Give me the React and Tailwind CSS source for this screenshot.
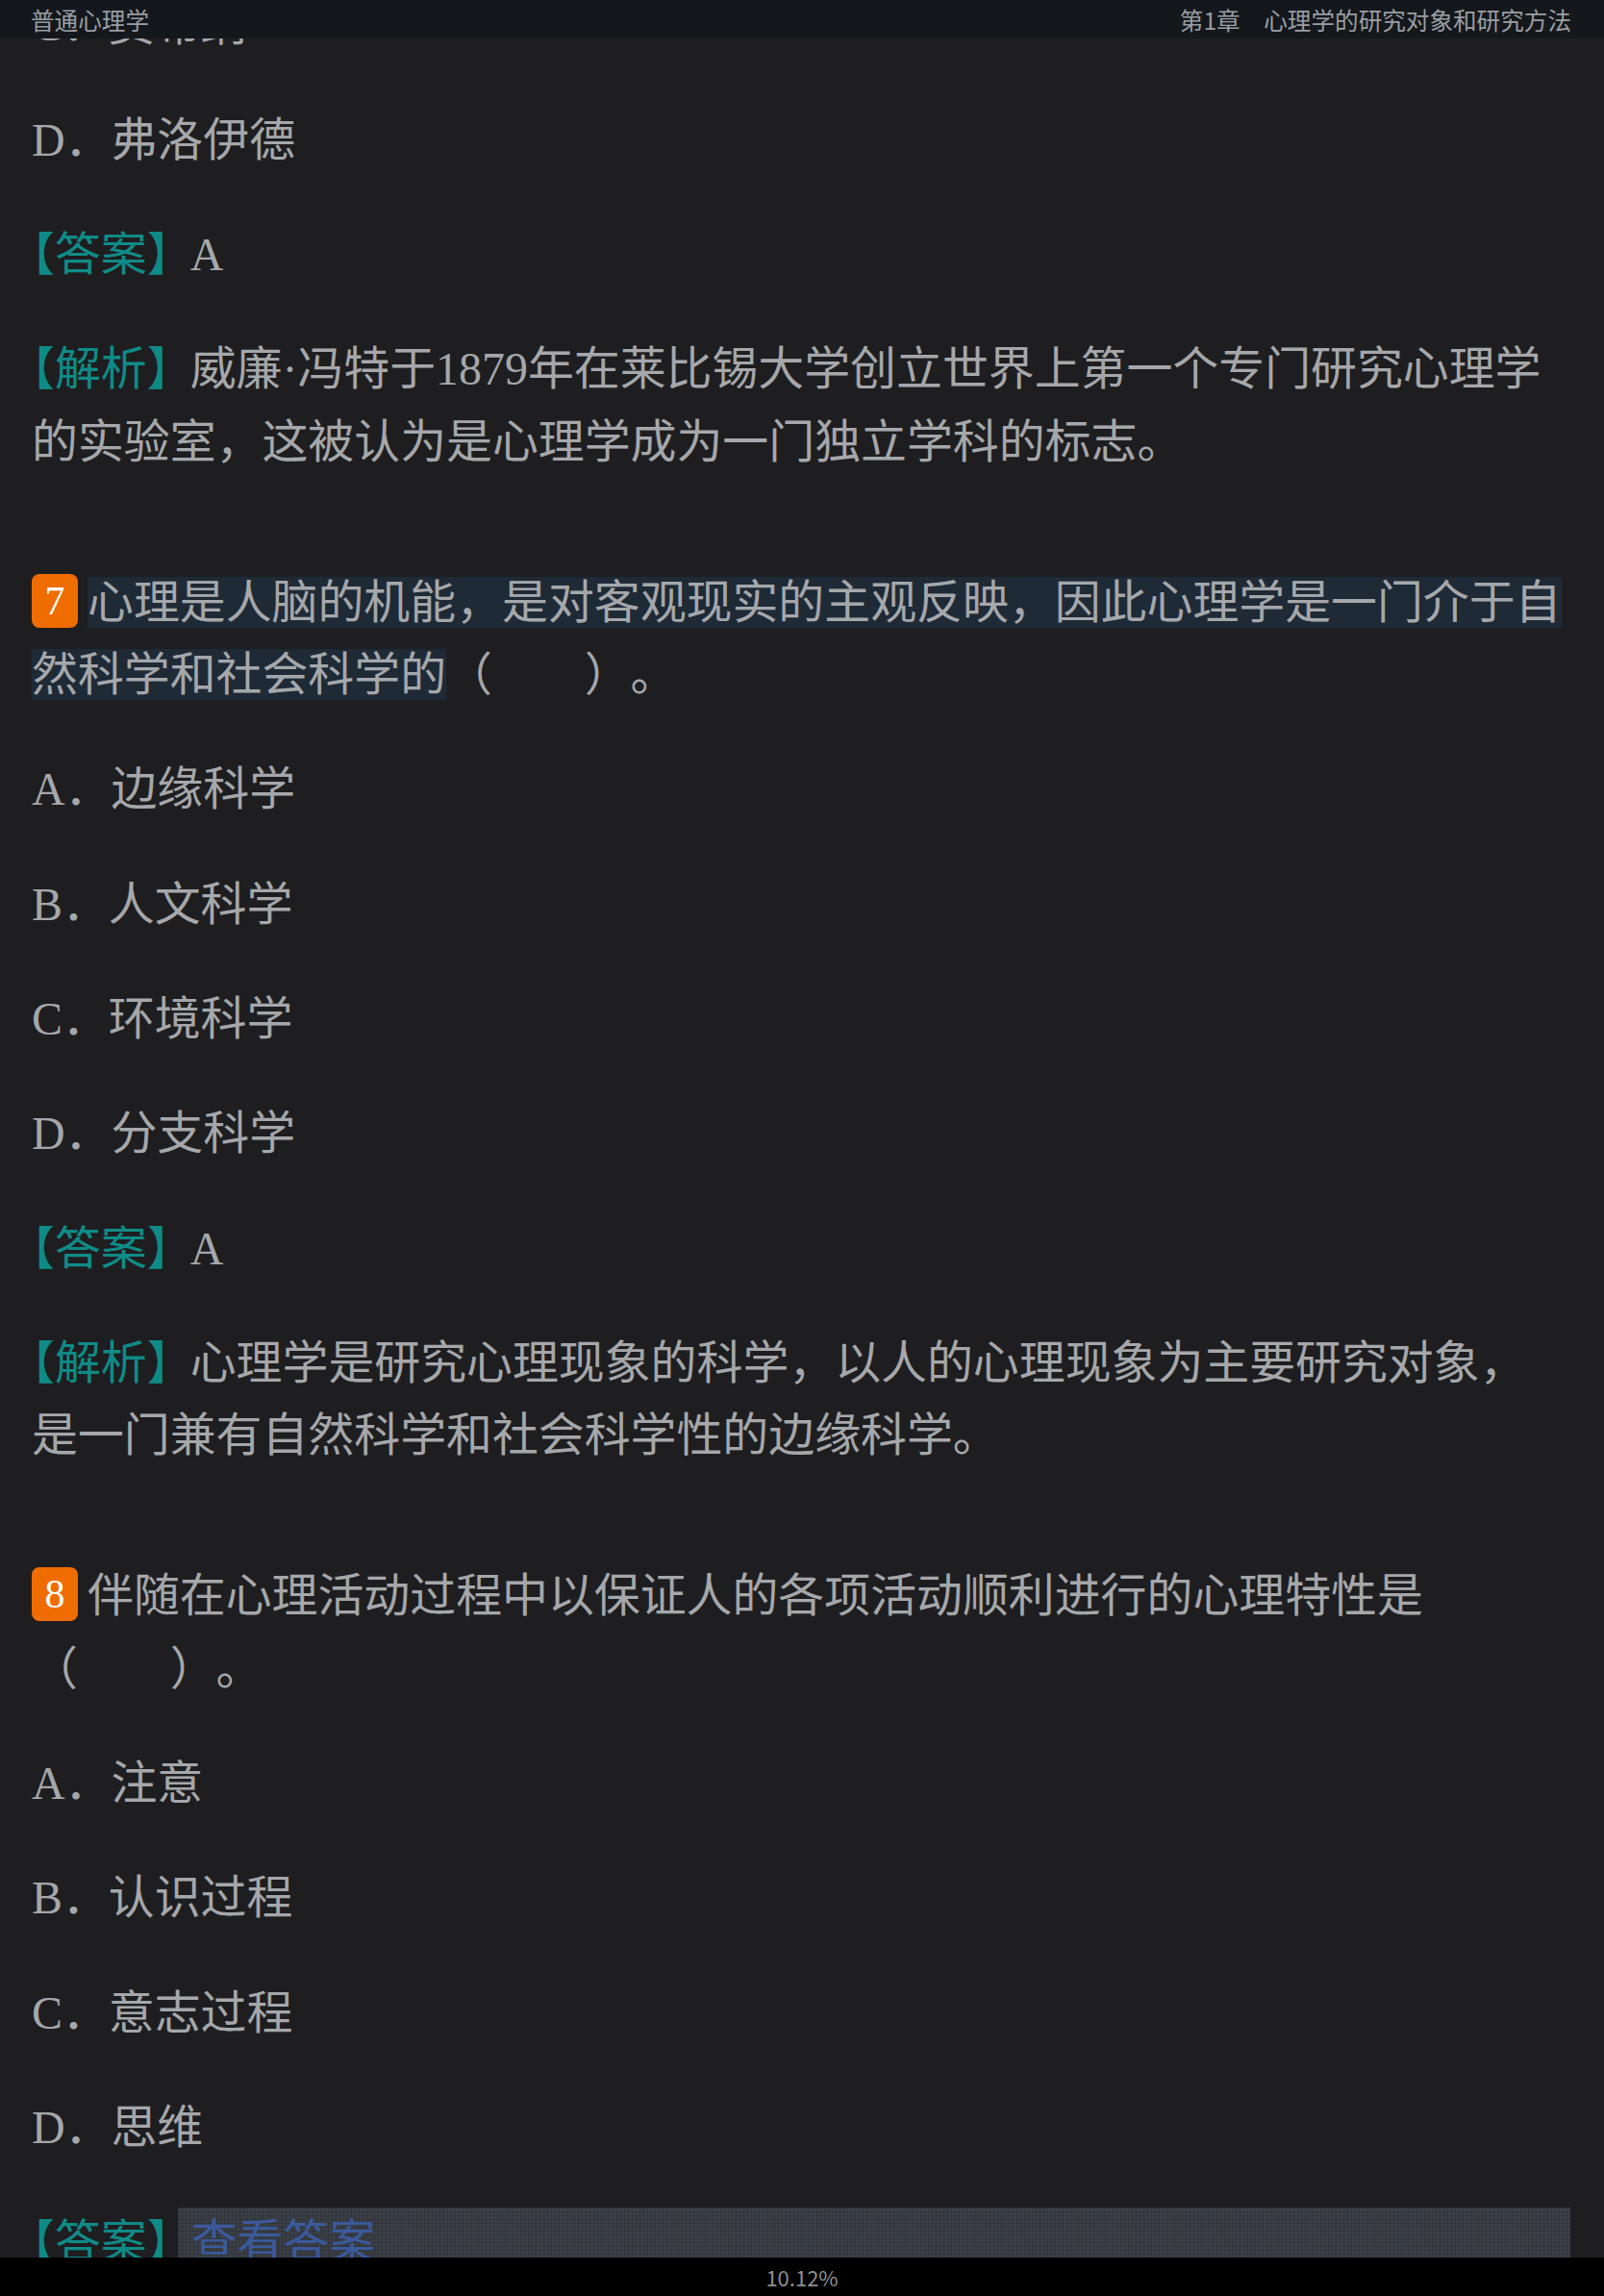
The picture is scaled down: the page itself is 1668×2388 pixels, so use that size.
import React from 'react'

const serif = "font-['Liberation_Serif','Noto_Sans_CJK_SC',serif]"
const sans = "font-['Noto_Sans_CJK_SC','Noto_Sans',sans-serif]"

function Label({ children, className = "mr-[21px]" }) {
  return (
    <span className={`text-[#0f8b87] ${className}`}>
      <span className="[font-feature-settings:'halt']">【</span>
      {children}
      <span className="[font-feature-settings:'halt']">】</span>
    </span>
  )
}

function Line({ children, className = "" }) {
  return <p className={`mb-[43.8px] leading-[75.5px] ${className}`}>{children}</p>
}

function Question({ num, children, tail, highlight }) {
  return (
    <Line className="mt-[47.7px]">
      <span className="mr-[10px] inline-block h-[56px] w-[48px] rounded-[8px] bg-[#ef6c00] text-center align-text-bottom text-[42px] leading-[56px] text-white">
        {num}
      </span>
      <span className={highlight ? "bg-[#1f2a37]" : ""}>{children}</span>
      <span className="whitespace-nowrap">{tail}</span>
    </Line>
  )
}

function Answer() {
  return (
    <Line>
      <Label>答案</Label>A
    </Line>
  )
}

export default function App() {
  return (
    <div className={`relative h-[2388px] overflow-hidden bg-[#1e1e20] ${serif}`}>
      <div className="-mt-[11.75px] flex flex-col pl-[33px] pr-[34px] text-[47.9px] text-[#a5a7aa] [text-spacing-trim:space-all]">
        <Line>C．费希纳</Line>
        <Line>D．弗洛伊德</Line>
        <Answer />
        <Line>
          <Label>解析</Label>威廉·冯特于1879年在莱比锡大学创立世界上第一个专门研究心理学的实验室，这被认为是心理学成为一门独立学科的标志。
        </Line>

        <Question num="7" highlight tail="（　　）。">
          心理是人脑的机能，是对客观现实的主观反映，因此心理学是一门介于自然科学和社会科学的
        </Question>
        <Line>A．边缘科学</Line>
        <Line>B．人文科学</Line>
        <Line>C．环境科学</Line>
        <Line>D．分支科学</Line>
        <Answer />
        <Line>
          <Label>解析</Label>心理学是研究心理现象的科学，以人的心理现象为主要研究对象，
          <br />
          是一门兼有自然科学和社会科学性的边缘科学。
        </Line>

        <Question num="8" tail="（　　）。">
          伴随在心理活动过程中以保证人的各项活动顺利进行的心理特性是
        </Question>
        <Line>A．注意</Line>
        <Line>B．认识过程</Line>
        <Line>C．意志过程</Line>
        <Line>D．思维</Line>
        <div className="flex items-start leading-[75.5px]">
          <Label className="">答案</Label>
          <div className="ml-[8px] mr-[1px] mt-[1.5px] h-[80px] flex-1 bg-[#3b3f46] bg-[linear-gradient(rgba(0,0,0,0.13)_1px,transparent_1px),linear-gradient(90deg,rgba(0,0,0,0.13)_1px,transparent_1px)] bg-[length:4px_4px] pl-[14px] leading-[72px] text-[#3a5a9c]">
            查看答案
          </div>
        </div>
      </div>

      <div className={`absolute inset-x-0 top-0 flex h-[40px] items-center justify-between bg-[#14181c] pl-[32px] pr-[34px] text-[24.6px] text-[#9a9ea3] ${sans}`}>
        <span>普通心理学</span>
        <span>第1章　心理学的研究对象和研究方法</span>
      </div>

      <div className={`absolute inset-x-0 bottom-0 flex h-[40px] items-center justify-center bg-black text-[22px] text-[#8e8e8e] ${sans}`}>
        10.12%
      </div>
    </div>
  )
}
